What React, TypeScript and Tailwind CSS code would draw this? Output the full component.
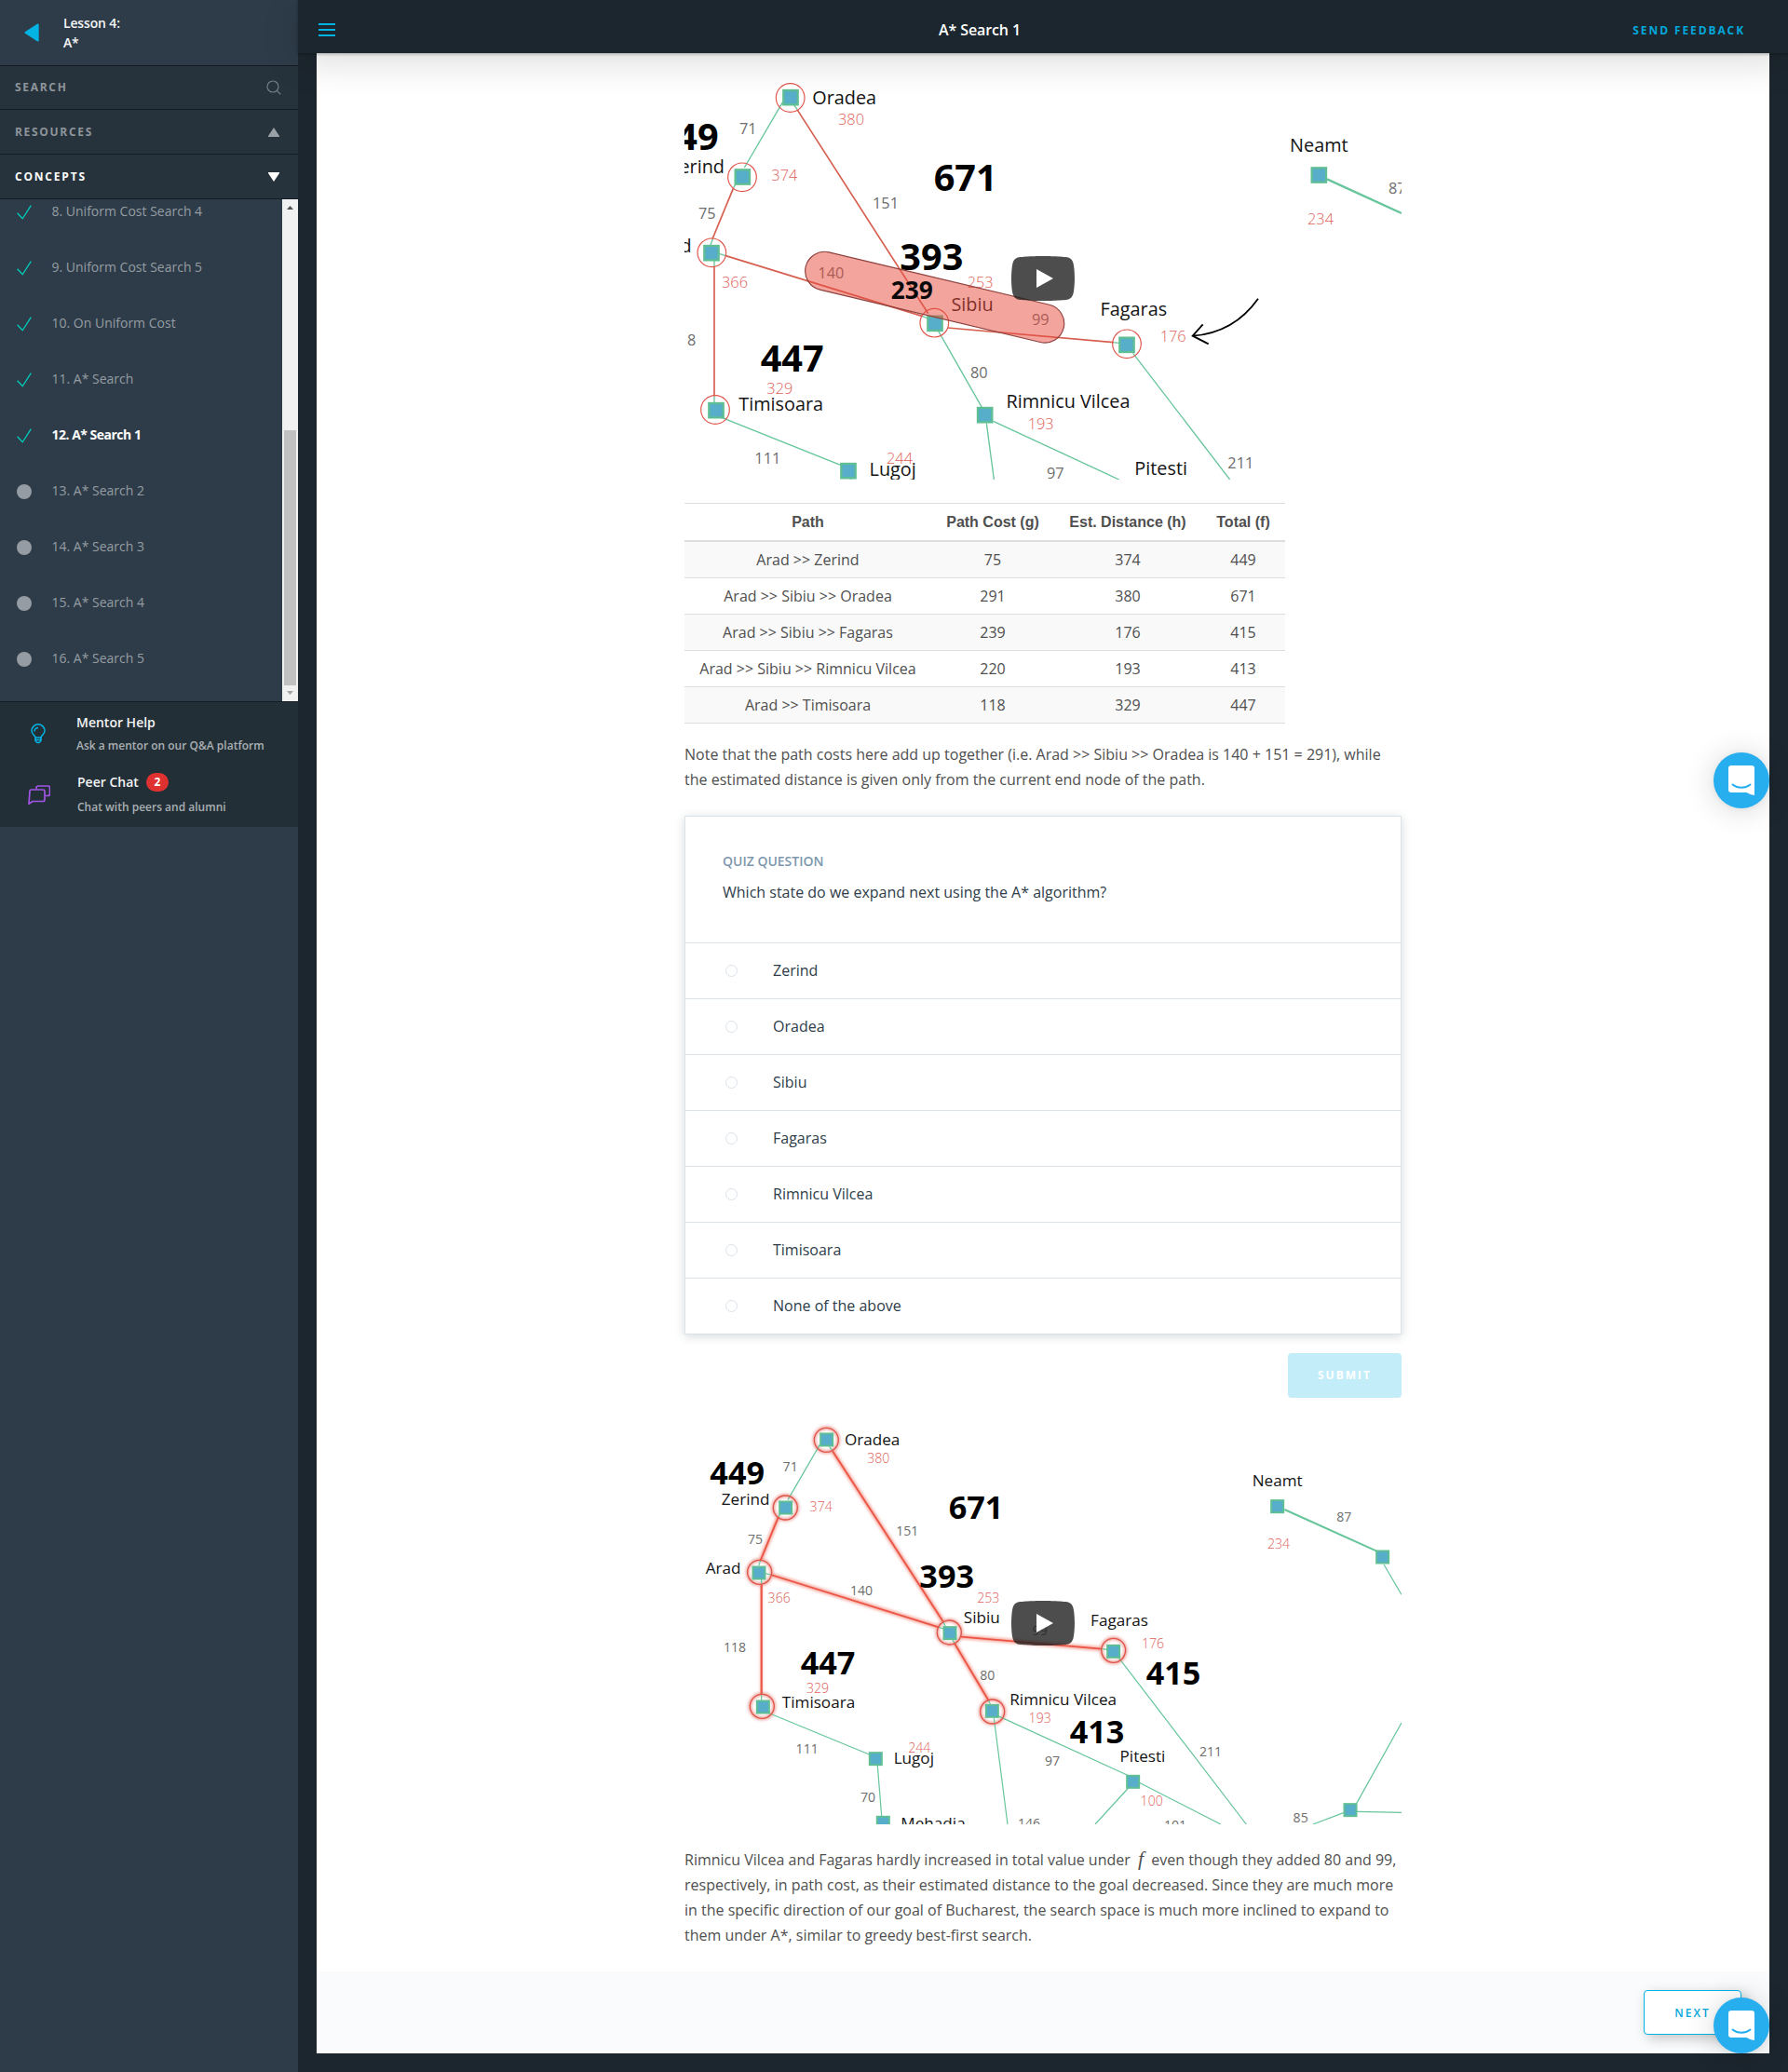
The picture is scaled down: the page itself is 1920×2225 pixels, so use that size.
import React from "react";

type Kind = "name" | "red" | "grey" | "big" | "mid";
type Label = [string, number, number, Kind];
type Seg = [number, number, number, number, number?];
type Pt = [number, number];

/* ---------- road map drawings ---------- */

function Labels({ items, k }: { items: Label[]; k: number }) {
  const size: Record<Kind, number> = { name: 59.5 * k, red: 49 * k, grey: 49 * k, big: 119 * k, mid: 79 };
  const fill: Record<Kind, string> = { name: "#141414", red: "#de6159", grey: "#6d6d6d", big: "#000", mid: "#0a0a0a" };
  const weight: Record<Kind, number> = { name: 400, red: 300, grey: 400, big: 700, mid: 700 };
  return (
    <>
      {items.map(([t, x, y, kind], i) => (
        <text key={i} x={x} y={y + 1} textAnchor="middle" fontSize={size[kind]} fontWeight={weight[kind]} fill={fill[kind]}>
          {t}
        </text>
      ))}
    </>
  );
}

function Lines({ items, color, width }: { items: Seg[]; color: string; width: number }) {
  return (
    <>
      {items.map(([a, b, c, d, w], i) => (
        <line key={i} x1={a} y1={b} x2={c} y2={d} stroke={color} strokeWidth={w ?? width} />
      ))}
    </>
  );
}

function Nodes({ items, size }: { items: Pt[]; size: number }) {
  const b = size * 0.13;
  return (
    <>
      {items.map(([x, y], i) => (
        <rect
          key={i}
          x={x - size / 2 + b / 2}
          y={y - size / 2 + b / 2}
          width={size - b}
          height={size - b}
          fill="#56aecb"
          stroke="#5fbf92"
          strokeWidth={b}
        />
      ))}
    </>
  );
}

function Rings({ items, r, width }: { items: Pt[]; r: number; width: number }) {
  return (
    <>
      {items.map(([x, y], i) => (
        <circle key={i} cx={x} cy={y} r={r} fill="none" stroke="#e0564b" strokeWidth={width} />
      ))}
    </>
  );
}

function PlayButton({ x, y }: { x: number; y: number }) {
  return (
    <g transform={`translate(${x} ${y}) scale(3)`}>
      <path
        fill="#212121"
        fillOpacity="0.8"
        d="M66.52,7.74c-0.78-2.93-2.49-5.41-5.42-6.19C55.79,.13,34,0,34,0S12.21,.13,6.9,1.55C3.97,2.33,2.27,4.81,1.48,7.74C0.06,13.05,0,24,0,24s0.06,10.95,1.48,16.26c0.78,2.93,2.49,5.41,5.42,6.19C12.21,47.87,34,48,34,48s21.79-0.13,27.1-1.55c2.93-0.78,4.64-3.26,5.42-6.19C67.94,34.95,68,24,68,24S67.94,13.05,66.52,7.74z"
      />
      <path fill="#fff" d="M45,24 27,14 27,34z" />
    </g>
  );
}

const under1: Label[] = [
  ["Oradea", 560, 184, "name"], ["380", 582, 250, "red"], ["71", 250, 280, "grey"], ["449", 53, 332, "big"],
  ["Zerind", 84, 406, "name"], ["374", 367, 431, "red"], ["75", 118, 554, "grey"], ["Arad", 2, 663, "name"],
  ["366", 207, 775, "red"], ["118", 40, 963, "grey"], ["151", 693, 521, "grey"], ["671", 950, 463, "big"],
  ["253", 998, 776, "red"], ["140", 517, 746, "grey"], ["Sibiu", 972, 851, "name"], ["99", 1192, 895, "grey"],
  ["447", 392, 1047, "big"], ["329", 352, 1118, "red"], ["Timisoara", 356, 1172, "name"], ["111", 313, 1344, "grey"],
  ["244", 738, 1344, "red"], ["Lugoj", 716, 1383, "name"], ["80", 994, 1067, "grey"],
  ["Rimnicu Vilcea", 1281, 1162, "name"], ["193", 1193, 1233, "red"], ["97", 1240, 1391, "grey"],
  ["Fagaras", 1492, 865, "name"], ["176", 1619, 950, "red"], ["Neamt", 2089, 338, "name"], ["87", 2341, 473, "grey"],
  ["234", 2094, 573, "red"], ["211", 1837, 1357, "grey"], ["Pitesti", 1580, 1380, "name"],
];

function MapOne() {
  return (
    <svg viewBox="45 96 2310 1299" className="block h-[433px] w-[770px] font-['Open_Sans',sans-serif]">
      <Lines
        color="#66c59b"
        width={4}
        items={[
          [362, 178, 238, 390], [212, 438, 203, 455], [137, 618, 128, 642], [141, 690, 141, 708], [141, 1126, 141, 1150],
          [158, 668, 178, 674], [812, 869, 830, 876], [1424, 953, 1446, 955], [398, 188, 408, 203],
          [165, 1195, 572, 1358], [580, 1380, 581, 1395], [862, 915, 1003, 1162], [1018, 1213, 1042, 1395],
          [1040, 1207, 1445, 1395], [1490, 988, 1802, 1395], [2115, 427, 2355, 537, 7],
        ]}
      />
      <Nodes
        size={53}
        items={[[387, 164], [232, 420], [132, 665], [852, 892], [147, 1172], [573, 1367], [1013, 1187], [1470, 961], [2089, 414]]}
      />
      <Lines
        color="#d65f50"
        width={5}
        items={[
          [408, 203, 830, 860], [203, 455, 135, 620], [141, 708, 141, 1126], [178, 674, 812, 869], [893, 906, 1426, 953],
        ]}
      />
      <Rings r={46} width={3.5} items={[[386, 165], [231, 421], [133, 664], [850, 890], [144, 1170], [1470, 958]]} />
      <Labels items={under1} k={1} />
      <rect
        x={-62} y={-62} width={854} height={124} rx={62}
        transform="translate(496 723) rotate(13.4)"
        fill="#e84a3b" fillOpacity={0.5} stroke="#8e403c" strokeWidth={3.5}
      />
      <Labels items={[["393", 841, 719, "big"], ["239", 778, 813, "mid"]]} k={1} />
      <path d="M1893 812 Q1815 922 1682 932 M1715 895 L1682 932 L1733 958" fill="none" stroke="#000" strokeWidth={5.5} />
      <PlayButton x={1098} y={675} />
    </svg>
  );
}

const labels2: Label[] = [
  ["Oradea", 650, 126, "name"], ["380", 670, 182, "red"], ["449", 215, 251, "big"], ["71", 386, 208, "grey"],
  ["Zerind", 242, 316, "name"], ["374", 485, 338, "red"], ["75", 273, 443, "grey"], ["Arad", 170, 538, "name"],
  ["366", 350, 631, "red"], ["118", 207, 792, "grey"], ["140", 615, 607, "grey"], ["151", 763, 416, "grey"],
  ["671", 984, 363, "big"], ["393", 890, 583, "big"], ["253", 1024, 633, "red"], ["Sibiu", 1003, 697, "name"],
  ["99", 1190, 736, "grey"], ["447", 507, 863, "big"], ["329", 474, 923, "red"], ["Timisoara", 477, 970, "name"],
  ["111", 440, 1117, "grey"], ["244", 802, 1115, "red"], ["Lugoj", 784, 1152, "name"], ["70", 636, 1274, "grey"],
  ["Mehadia", 846, 1360, "name"], ["80", 1021, 881, "grey"], ["Rimnicu Vilcea", 1265, 962, "name"],
  ["193", 1190, 1020, "red"], ["146", 1155, 1358, "grey"], ["97", 1230, 1156, "grey"], ["413", 1374, 1086, "big"],
  ["Pitesti", 1521, 1146, "name"], ["100", 1550, 1287, "red"], ["101", 1626, 1363, "grey"], ["211", 1740, 1128, "grey"],
  ["415", 1620, 895, "big"], ["Fagaras", 1446, 708, "name"], ["176", 1554, 780, "red"], ["Neamt", 1955, 258, "name"],
  ["234", 1959, 458, "red"], ["87", 2170, 372, "grey"], ["85", 2030, 1341, "grey"],
];

const route2: Seg[] = [
  [522, 145, 878, 694], [347, 358, 290, 497], [293, 575, 293, 929, 6.5], [323, 543, 864, 712], [936, 743, 1388, 782],
  [915, 764, 1024, 947],
];
const rings2: Pt[] = [[502, 109], [370, 327], [287, 535], [898, 729], [295, 967], [1037, 984], [1427, 787]];

function MapTwo() {
  return (
    <svg viewBox="45 48 2310 1299" className="block h-[433px] w-[770px] font-['Open_Sans',sans-serif]">
      <defs>
        <filter id="glow" x="-5%" y="-5%" width="110%" height="110%">
          <feGaussianBlur stdDeviation="5" />
        </filter>
      </defs>
      <g filter="url(#glow)" opacity={0.5}>
        <Lines color="#f0523f" width={14} items={route2} />
        <Rings r={39} width={12} items={rings2} />
      </g>
      <Lines
        color="#66c59b"
        width={3.6}
        items={[
          [481, 124, 378, 302], [355, 345, 347, 358], [290, 497, 284, 514], [293, 558, 293, 575], [293, 929, 293, 948],
          [306, 539, 323, 543], [864, 712, 880, 717], [878, 694, 886, 710], [512, 130, 522, 145],
          [908, 750, 915, 764], [1024, 947, 1030, 960], [1388, 782, 1407, 784],
          [320, 990, 640, 1122], [667, 1158, 680, 1320], [1042, 1005, 1086, 1347], [1055, 998, 1490, 1197],
          [1510, 1213, 1773, 1347], [1475, 1230, 1368, 1347], [1445, 812, 1855, 1347], [1978, 333, 2275, 467, 6],
          [2298, 510, 2355, 607], [2210, 1280, 2355, 1020], [2210, 1306, 2355, 1309], [2168, 1310, 2070, 1347],
        ]}
      />
      <Nodes
        size={45}
        items={[
          [503, 108], [371, 327], [285, 537], [900, 731], [298, 969], [1036, 982], [1427, 790], [661, 1136], [685, 1342],
          [1490, 1210], [1955, 323], [2294, 486], [2190, 1301],
        ]}
      />
      <Lines color="#ea5545" width={5.5} items={route2} />
      <Rings r={39} width={4} items={rings2} />
      <Labels items={labels2} k={0.863} />
      <PlayButton x={1098} y={627} />
    </svg>
  );
}

/* ---------- sidebar ---------- */

const lessons: { title: string; state: "done" | "active" | "todo" }[] = [
  { title: "8. Uniform Cost Search 4", state: "done" },
  { title: "9. Uniform Cost Search 5", state: "done" },
  { title: "10. On Uniform Cost", state: "done" },
  { title: "11. A* Search", state: "done" },
  { title: "12. A* Search 1", state: "active" },
  { title: "13. A* Search 2", state: "todo" },
  { title: "14. A* Search 3", state: "todo" },
  { title: "15. A* Search 4", state: "todo" },
  { title: "16. A* Search 5", state: "todo" },
];

function Sidebar() {
  return (
    <aside className="w-[320px] shrink-0 bg-[#2e3c49]">
      <div className="flex h-[71px] items-center border-b border-[#151b24] pl-[26px]">
        <svg className="h-5 w-4" viewBox="0 0 16 20">
          <path d="M1.2 9 14.2.6Q15.6.2 15.7 1.6V18.6Q15.6 19.9 14.2 19.4L1.2 11Q-.2 10 1.2 9z" fill="#02b3e4" />
        </svg>
        <div className="ml-[26px] pb-px text-[14px] leading-[21px] font-semibold tracking-[-0.15px] text-[#f5f6f7]">
          <div>Lesson 4:</div>
          <div>A*</div>
        </div>
      </div>

      <div className="flex h-[47px] items-center justify-between border-b border-[#151b24] bg-[#27333c] pr-[18px] pl-4">
        <span className="text-[12px] font-bold tracking-[1.7px] text-[#8e959b]">SEARCH</span>
        <svg className="h-4 w-4" viewBox="0 0 16 16" fill="none" stroke="#6f7f8c" strokeWidth="1.2">
          <circle cx="7" cy="7" r="6" />
          <path d="M11.3 11.3 15.3 15.3" />
        </svg>
      </div>
      <div className="flex h-12 items-center justify-between border-b border-[#151b24] bg-[#27333c] pr-5 pl-4">
        <span className="text-[12px] font-bold tracking-[1.7px] text-[#8e959b]">RESOURCES</span>
        <svg className="h-[10px] w-3" viewBox="0 0 12 10">
          <path d="M6 0 12 9V10H0V9z" fill="#9aa1a6" />
        </svg>
      </div>
      <div className="flex h-12 items-center justify-between border-b border-[#151b24] bg-[#27333c] pr-5 pl-4">
        <span className="text-[12px] font-bold tracking-[1.8px] text-white">CONCEPTS</span>
        <svg className="h-[10px] w-3" viewBox="0 0 12 10">
          <path d="M6 10 12 1V0H0V1z" fill="#fff" />
        </svg>
      </div>

      <div className="flex h-[539px] overflow-hidden">
        <ul className="-mt-[17px] flex-1">
          {lessons.map((l) => (
            <li key={l.title} className="flex h-[60px] items-center pl-[18px]">
              {l.state === "todo" ? (
                <span className="mt-[2px] mr-[0.5px] h-[15.5px] w-[15.5px] rounded-full bg-[#959ca3]" />
              ) : (
                <svg className="mt-[2px] h-4 w-[16px]" viewBox="0 0 16 16" fill="none" stroke="#02ccba" strokeWidth="1.3">
                  <path d="M.6 8.8 6.2 14.8 15.3.6" />
                </svg>
              )}
              <span
                className={
                  l.state === "active"
                    ? "ml-[21.5px] pb-[2px] text-[14px] font-bold tracking-[-0.5px] text-white"
                    : "ml-[21.5px] pb-[2px] text-[14px] text-[#959ca3]"
                }
              >
                {l.title}
              </span>
            </li>
          ))}
        </ul>
        <div className="flex w-[17px] flex-col items-center bg-[#f1f1f1]">
          <svg className="h-[17px] w-[17px]" viewBox="0 0 17 17">
            <path d="M5 11h7L8.5 7z" fill="#505050" />
          </svg>
          <div className="mt-[231px] h-[274px] w-[13px] bg-[#c1c1c1]" />
          <svg className="h-[17px] w-[17px]" viewBox="0 0 17 17">
            <path d="M5 6h7L8.5 10z" fill="#a3a3a3" />
          </svg>
        </div>
      </div>

      <div className="h-[135px] border-t border-[#151b24] bg-[#232f37]">
        <div className="flex h-[67px] items-start pt-[11px] pl-[33px]">
          <svg className="mt-3 h-[22px] w-4" viewBox="0 0 16 22" fill="none" stroke="#02b3e4" strokeWidth="1.5">
            <path d="M5 15C5 12.5 1 12 1 7.8a7 7 0 0 1 14 0C15 12 11 12.5 11 15z" />
            <path d="M4 8.4A4 4 0 0 1 8 4.4M5 15v3.5l2 2h2l2-2V15M5 17.5h6" />
          </svg>
          <div className="ml-[33px]">
            <div className="text-[14px] leading-[22px] font-semibold text-[#f2f3f4]">Mentor Help</div>
            <div className="mt-[3px] text-[12px] leading-[22px] font-semibold text-[#a9afb3]">Ask a mentor on our Q&amp;A platform</div>
          </div>
        </div>
        <div className="flex items-start pt-[7px] pl-[30px]">
          <svg className="mt-[15px] h-[22px] w-6" viewBox="0 0 24 22" fill="none" stroke="#a155e6" strokeWidth="1.7" strokeLinejoin="round">
            <path d="M2 6.5a1.500 1.500 0 0 1 1.500-1.500H16a2 2 0 0 1 2 2V15.500a2 2 0 0 1-2 2H5L1 20.300z" />
            <path d="M9 4.500V3a2 2 0 0 1 2-2H21.500a2 2 0 0 1 2 2V9.500a2 2 0 0 1-2 2H18.500" />
          </svg>
          <div className="ml-[29px]">
            <div className="flex h-[22px] items-center">
              <span className="text-[14px] font-semibold text-[#f2f3f4]">Peer Chat</span>
              <span className="ml-2 flex h-5 w-6 translate-y-px items-center justify-center rounded-full bg-[#e03131] text-[12px] font-bold text-white">2</span>
            </div>
            <div className="mt-[6px] text-[12px] leading-[22px] font-semibold text-[#a9afb3]">Chat with peers and alumni</div>
          </div>
        </div>
      </div>
    </aside>
  );
}

/* ---------- main content ---------- */

const rows = [
  ["Arad >> Zerind", "75", "374", "449"],
  ["Arad >> Sibiu >> Oradea", "291", "380", "671"],
  ["Arad >> Sibiu >> Fagaras", "239", "176", "415"],
  ["Arad >> Sibiu >> Rimnicu Vilcea", "220", "193", "413"],
  ["Arad >> Timisoara", "118", "329", "447"],
];

const answers = ["Zerind", "Oradea", "Sibiu", "Fagaras", "Rimnicu Vilcea", "Timisoara", "None of the above"];

function ChatBubble({ className }: { className: string }) {
  return (
    <div
      className={`absolute right-5 flex h-[60px] w-[60px] items-center justify-center rounded-full bg-[#27aeef] shadow-[0_1px_6px_rgba(0,0,0,0.06),0_2px_32px_rgba(0,0,0,0.16)] ${className}`}
    >
      <svg className="h-8 w-7" viewBox="0 0 28 32">
        <path d="M3 0H25a3 3 0 0 1 3 3V32s-4.5-.6-8.5-3H3a3 3 0 0 1-3-3V3a3 3 0 0 1 3-3z" fill="#fff" />
        <path d="M4.500 20.500c5.500 4.400 13.500 4.400 19 0" fill="none" stroke="#27aeef" strokeWidth="2" strokeLinecap="round" />
      </svg>
    </div>
  );
}

export default function App() {
  return (
    <div className="relative flex h-[2225px] w-[1920px] overflow-hidden bg-[#1c262e] font-['Open_Sans',sans-serif]">
      <Sidebar />
      <div className="flex min-w-0 flex-1 flex-col">
        <header className="z-10 flex h-[57px] shrink-0 items-center bg-[#1c262e] pb-3 pl-[22px] shadow-[0_1px_3px_rgba(0,0,0,0.3),0_10px_40px_rgba(0,0,0,0.14)]">
          <div className="mt-[19px] flex flex-col gap-1">
            <span className="h-[2px] w-[18px] bg-[#02b3e4]" />
            <span className="h-[2px] w-[18px] bg-[#02b3e4]" />
            <span className="h-[2px] w-[18px] bg-[#02b3e4]" />
          </div>
          <h1 className="mt-[18px] ml-[648px] w-[87px] text-[16px] font-semibold tracking-[-0.1px] whitespace-nowrap text-white">A* Search 1</h1>
          <span className="mt-[20px] mr-[46px] ml-auto text-[12px] font-bold tracking-[1.9px] text-[#02a8dc]">SEND FEEDBACK</span>
        </header>

        <main className="mx-5 flex h-[2148px] flex-col bg-white">
          <div className="ml-[395px] flex w-[770px] flex-1 flex-col pt-[25px]">
            <MapOne />

            <table className="mt-[25px] w-[645px] table-fixed border-separate border-spacing-0 text-center text-[16px] text-[#4f4f4f]">
              <colgroup>
                <col className="w-[265px]" />
                <col className="w-[132px]" />
                <col className="w-[158px]" />
                <col className="w-[90px]" />
              </colgroup>
              <thead>
                <tr className="h-[42px] font-['Liberation_Sans',sans-serif]">
                  {["Path", "Path Cost (g)", "Est. Distance (h)", "Total (f)"].map((h) => (
                    <th key={h} className="border-t border-b-2 border-t-[#ddd] border-b-[#ddd] p-0 font-bold">
                      {h}
                    </th>
                  ))}
                </tr>
              </thead>
              <tbody>
                {rows.map((r) => (
                  <tr key={r[0]} className="h-[39px] odd:bg-[#f9f9f9]">
                    {r.map((c, i) => (
                      <td key={i} className="border-b border-[#ddd] p-0 pb-px leading-[22px]">
                        {c}
                      </td>
                    ))}
                  </tr>
                ))}
              </tbody>
            </table>

            <p className="mt-5 text-[16px] leading-[27px] whitespace-nowrap text-[#4f4f4f]">
              Note that the path costs here add up together (i.e. Arad &gt;&gt; Sibiu &gt;&gt; Oradea is 140 + 151 = 291), while
              <br />
              the estimated distance is given only from the current end node of the path.
            </p>

            <section className="mt-[25px] h-[557px] border border-[#dbe2e8] bg-white shadow-[0_2px_10px_rgba(46,61,73,0.2)]">
              <div className="h-[135px] pt-[37px] pl-10">
                <div className="text-[14px] leading-[22px] font-semibold text-[#7d97ad]">QUIZ QUESTION</div>
                <div className="mt-[11px] text-[16px] leading-[22px] text-[#2e3d49]">Which state do we expand next using the A* algorithm?</div>
              </div>
              {answers.map((a) => (
                <div key={a} className="flex h-[60px] items-center border-t border-[#dbe2e8] pl-[43px]">
                  <span className="h-[13px] w-[13px] rounded-full border border-[#dbe2e8]" />
                  <span className="ml-[38px] pb-px text-[16px] text-[#2e3d49]">{a}</span>
                </div>
              ))}
            </section>

            <button className="mt-5 h-12 w-[122px] self-end rounded-[4px] bg-[#c3edf9] text-[12px] font-bold tracking-[2px] text-white">SUBMIT</button>

            <div className="mt-[25px]">
              <MapTwo />
            </div>

            <p className="mt-[25px] text-[16px] leading-[27px] whitespace-nowrap text-[#4f4f4f]">
              Rimnicu Vilcea and Fagaras hardly increased in total value under{" "}
              <span className="px-[4px] font-['Liberation_Serif',serif] text-[22px] leading-[20px] italic">f</span> even though they added 80 and 99,
              <br />
              respectively, in path cost, as their estimated distance to the goal decreased. Since they are much more
              <br />
              in the specific direction of our goal of Bucharest, the search space is much more inclined to expand to
              <br />
              them under A*, similar to greedy best-first search.
            </p>
          </div>

          <footer className="flex h-[88px] shrink-0 items-center justify-end bg-[#fafbfd] pr-[30px]">
            <button className="h-12 w-[105px] rounded-[4px] border border-[#02b3e4] bg-white pt-px text-[12px] font-semibold tracking-[2px] text-[#02a8dc] shadow-[4px_4px_14px_rgba(0,0,0,0.22)]">
              NEXT
            </button>
          </footer>
        </main>
      </div>

      <ChatBubble className="top-[808px] z-20" />
      <ChatBubble className="top-[2145px] z-20" />
    </div>
  );
}
